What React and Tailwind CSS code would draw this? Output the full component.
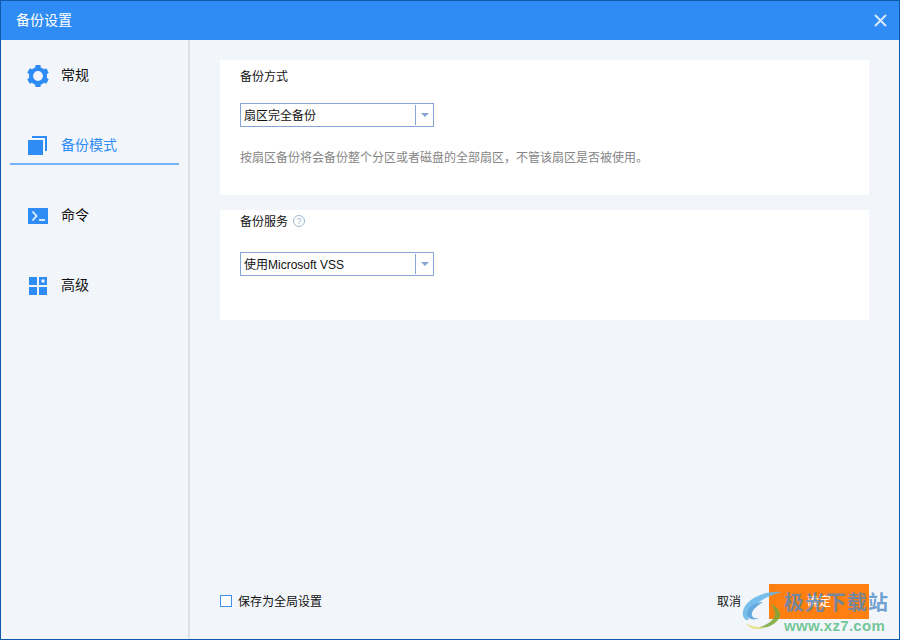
const font = "font-['Liberation_Sans','Noto_Sans_CJK_SC',sans-serif]";

function SelectBox({ text }) {
  return (
    <div className="flex h-6 w-[194px] items-center border border-[#86a5d4] bg-white pl-[3px] text-[12px] text-[#111]">
      <span className="flex-1 pt-[2px] whitespace-nowrap">{text}</span>
      <span className="h-5 w-px bg-[#86a5d4]" />
      <span className="flex w-[17px] justify-center">
        <span className="h-0 w-0 border-x-[4px] border-t-[4px] border-x-transparent border-t-[#86a5d4]" />
      </span>
    </div>
  );
}

function NavItem({ icon, label, active }) {
  return (
    <div className="mx-[9px] h-[70px] pt-[18px]">
      <div className={active ? "flex h-[37px] items-center border-b-2 border-[#74b3fb] pl-4" : "flex h-[37px] items-center border-b-2 border-transparent pl-4"}>
        <span className="flex w-6 justify-center">{icon}</span>
        <span className={active ? "ml-[11px] text-[14px] text-[#2f8cf5]" : "ml-[11px] text-[14px] text-[#111]"}>{label}</span>
      </div>
    </div>
  );
}

function GearIcon() {
  return (
    <svg width="24" height="24" viewBox="0 0 24 24" fill="#2f8cf5">
      <circle cx="12" cy="12" r="7" fill="none" stroke="#2f8cf5" strokeWidth="4.200" />
      {[0, 60, 120, 180, 240, 300].map((deg) => (
        <rect key={deg} x="9.300" y="1" width="5.400" height="5" rx="0.800" transform={`rotate(${deg} 12 12)`} />
      ))}
    </svg>
  );
}

export default function App() {
  return (
    <div className={`relative flex h-[640px] w-[900px] flex-col overflow-hidden border border-[#0f5aa8] bg-[#f2f6fb] ${font}`}>
      {/* Title */}
      <div className="flex h-[39px] shrink-0 items-center justify-between bg-[#2f8cf5] pr-3 pl-[15px] text-[14px] text-white">
        <span>备份设置</span>
        <svg width="13" height="13" viewBox="0 0 13 13" stroke="#d5e8fd" strokeWidth="2">
          <path d="M1 1l11 11M12 1L1 12" />
        </svg>
      </div>

      <div className="flex flex-1">
        {/* Sidebar */}
        <div className="w-[189px] shrink-0 border-r-2 border-[#dde2e9]">
          <NavItem label="常规" icon={<GearIcon />} />
          <NavItem
            active
            label="备份模式"
            icon={
              <svg width="20" height="20" viewBox="0 0 20 20" fill="#2f8cf5">
                <rect x="0" y="4" width="15" height="15" />
                <path d="M4 0h15v15h-2V2H4z" />
              </svg>
            }
          />
          <NavItem
            label="命令"
            icon={
              <svg width="20" height="16" viewBox="0 0 20 16">
                <rect width="20" height="16" fill="#2f8cf5" />
                <path d="M4.500 3.500l4 4.500-4 4.500" fill="none" stroke="#e6f1fe" strokeWidth="1.800" />
                <path d="M11 12h6" stroke="#fff" strokeWidth="1.600" />
              </svg>
            }
          />
          <NavItem
            label="高级"
            icon={
              <svg width="18" height="18" viewBox="0 0 18 18" fill="#2f8cf5">
                <rect width="8" height="8" />
                <path d="M10 0h8v8h-8zM12.500 2.500v3h3v-3z" fillRule="evenodd" />
                <rect y="10" width="8" height="8" />
                <rect x="10" y="10" width="8" height="8" />
              </svg>
            }
          />
        </div>

        {/* Content */}
        <div className="flex flex-1 flex-col px-[30px] pt-5 pb-5">
          <div className="h-[135px] bg-white px-5 pt-2">
            <div className="text-[12px] leading-[18px] text-[#111]">备份方式</div>
            <div className="mt-[17px]">
              <SelectBox text="扇区完全备份" />
            </div>
            <p className="mt-[22px] text-[12px] leading-[18px] text-[#858585]">按扇区备份将会备份整个分区或者磁盘的全部扇区，不管该扇区是否被使用。</p>
          </div>

          <div className="mt-[15px] h-[110px] bg-white px-5 pt-[3px]">
            <div className="flex items-center gap-[5px] text-[12px] leading-[18px] text-[#111]">
              备份服务
              <span className="mb-[2px] flex h-3 w-3 items-center justify-center rounded-full border border-[#9db8d6] text-[9px] leading-none text-[#9db8d6]">?</span>
            </div>
            <div className="mt-[21px]">
              <SelectBox text="使用Microsoft VSS" />
            </div>
          </div>

          <div className="mt-auto flex items-center">
            <span className="mb-[2px] h-3 w-3 border-[1.5px] border-[#3d90ee] bg-white" />
            <span className="ml-[6px] text-[12px] text-[#111]">保存为全局设置</span>
            <span className="ml-auto text-[12px] text-[#111]">取消</span>
            <div className="ml-[28px] flex h-[35px] w-[100px] items-center justify-center bg-[#ff8010] text-[12px] text-white">确定</div>
          </div>
        </div>
      </div>

      {/* Watermark */}
      <div className="absolute top-[589px] left-[740px] flex items-start">
        <svg width="44" height="41" viewBox="0 0 44 41" fill="none" className="opacity-85">
          <path d="M41 2C28 1 10 5 3 18c-3 7 0 13 5 12C4 24 12 10 41 2z" fill="#62b5ea" />
          <path d="M22 12C14 12 6 17 6 24c0 5 7 7 12 4-5 1-8-1-7-5 1-4 6-8 11-11z" fill="#4d9bd8" />
          <path d="M30 14c6 3 10 7 9 12-2 8-14 13-25 13 10-3 19-8 20-14 0-4-2-8-4-11z" fill="#7aa83a" />
          <path d="M5 33c3 4 6 6 10 6 4 0 7-1 10-2-7 1-14 0-20-4z" fill="#e3de7c" />
        </svg>
        <div className="ml-[-1px] flex flex-col">
          <span className="text-[20px] leading-[26px] font-bold tracking-[1px] text-[#4f88c4]/80">极光下载站</span>
          <span className="mt-[1px] text-[15px] leading-[18px] font-semibold tracking-[0.3px] text-[#5bbd83]/85">www.xz7.com</span>
        </div>
      </div>
    </div>
  );
}
